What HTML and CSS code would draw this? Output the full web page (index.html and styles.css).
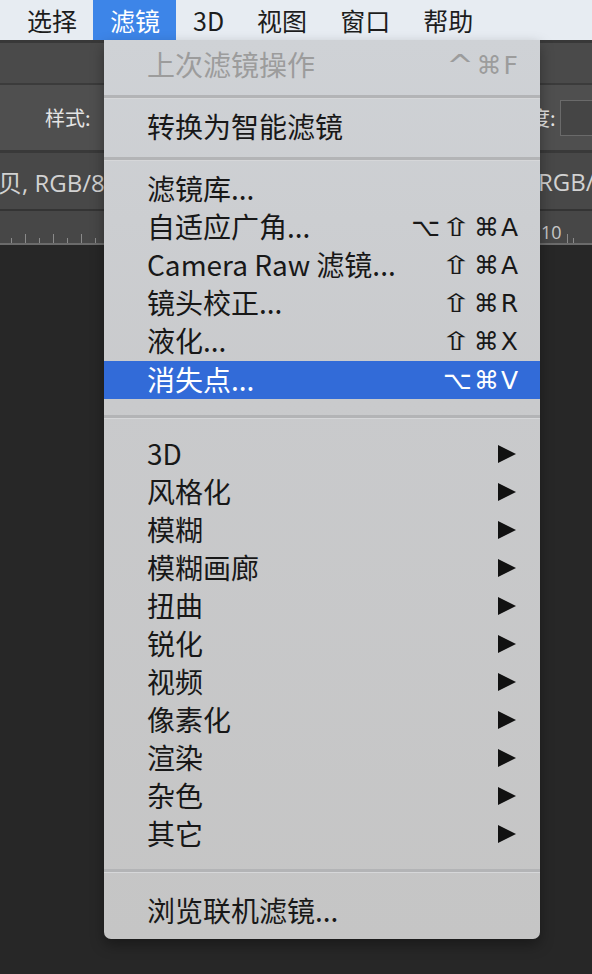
FILE: index.html
```html
<!DOCTYPE html>
<html lang="zh-CN">
<head>
<meta charset="utf-8">
<title>滤镜菜单</title>
<link rel="stylesheet" href="styles.css">
</head>
<body>
<div class="menubar">
  <span class="mb-item">选择</span>
  <span class="mb-item active">滤镜</span>
  <span class="mb-item">3D</span>
  <span class="mb-item">视图</span>
  <span class="mb-item">窗口</span>
  <span class="mb-item">帮助</span>
</div>
<div class="workspace">
  <div class="appbar"></div>
  <div class="options">
    <span class="opt-label">样式:</span>
    <div class="opt-right"><span class="opt-label">度:</span><span class="opt-box"></span></div>
  </div>
  <div class="tabs">
    <span class="tab-text">贝, RGB/8</span>
    <span class="tab-text right">RGB/8</span>
  </div>
  <div class="ruler">
    <div class="ticks">
      <i class="t s"></i><i class="t"></i><i class="t s"></i><i class="t"></i><i class="t s"></i><i class="t"></i><i class="t s"></i>
    </div>
    <div class="ruler-right"><span class="rnum">10</span><i class="t"></i><i class="t s"></i></div>
  </div>
  <div class="canvas"></div>
</div>

<div class="menu">
  <div class="item disabled"><span class="label">上次滤镜操作</span><span class="sc"><span class="caret">^</span>⌘F</span></div>
  <div class="sep sep-a"></div>
  <div class="item"><span class="label">转换为智能滤镜</span></div>
  <div class="sep sep-b"></div>
  <div class="item"><span class="label">滤镜库...</span></div>
  <div class="item"><span class="label">自适应广角...</span><span class="sc">⌥<span class="shift">⇧</span>⌘A</span></div>
  <div class="item"><span class="label">Camera Raw 滤镜...</span><span class="sc"><span class="shift">⇧</span>⌘A</span></div>
  <div class="item"><span class="label">镜头校正...</span><span class="sc"><span class="shift">⇧</span>⌘R</span></div>
  <div class="item"><span class="label">液化...</span><span class="sc"><span class="shift">⇧</span>⌘X</span></div>
  <div class="item selected"><span class="label">消失点...</span><span class="sc">⌥⌘V</span></div>
  <div class="sep sep-c"></div>
  <div class="item"><span class="label">3D</span><svg class="arrow" viewBox="0 0 18 18"><polygon points="0,0 18,9 0,18"/></svg></div>
  <div class="item"><span class="label">风格化</span><svg class="arrow" viewBox="0 0 18 18"><polygon points="0,0 18,9 0,18"/></svg></div>
  <div class="item"><span class="label">模糊</span><svg class="arrow" viewBox="0 0 18 18"><polygon points="0,0 18,9 0,18"/></svg></div>
  <div class="item"><span class="label">模糊画廊</span><svg class="arrow" viewBox="0 0 18 18"><polygon points="0,0 18,9 0,18"/></svg></div>
  <div class="item"><span class="label">扭曲</span><svg class="arrow" viewBox="0 0 18 18"><polygon points="0,0 18,9 0,18"/></svg></div>
  <div class="item"><span class="label">锐化</span><svg class="arrow" viewBox="0 0 18 18"><polygon points="0,0 18,9 0,18"/></svg></div>
  <div class="item"><span class="label">视频</span><svg class="arrow" viewBox="0 0 18 18"><polygon points="0,0 18,9 0,18"/></svg></div>
  <div class="item"><span class="label">像素化</span><svg class="arrow" viewBox="0 0 18 18"><polygon points="0,0 18,9 0,18"/></svg></div>
  <div class="item"><span class="label">渲染</span><svg class="arrow" viewBox="0 0 18 18"><polygon points="0,0 18,9 0,18"/></svg></div>
  <div class="item"><span class="label">杂色</span><svg class="arrow" viewBox="0 0 18 18"><polygon points="0,0 18,9 0,18"/></svg></div>
  <div class="item"><span class="label">其它</span><svg class="arrow" viewBox="0 0 18 18"><polygon points="0,0 18,9 0,18"/></svg></div>
  <div class="sep sep-d"></div>
  <div class="item"><span class="label">浏览联机滤镜...</span></div>
</div>
</body>
</html>
```

FILE: styles.css
```css
* { box-sizing: border-box; }
html, body {
  margin: 0;
  padding: 0;
  width: 592px;
  height: 974px;
  overflow: hidden;
  background: #272727;
  font-family: "Noto Sans CJK SC", "Liberation Sans", sans-serif;
}

.menubar {
  height: 40px;
  background: #e7ecf2;
  display: flex;
  align-items: stretch;
  padding-left: 10px;
}
.mb-item {
  display: flex;
  align-items: center;
  padding: 0 16px 0 17px;
  font-size: 25px;
  color: #1d1d1d;
  line-height: 1;
}
.mb-item.active {
  background: #3d85e8;
  color: #ffffff;
}

.workspace {
  display: flex;
  flex-direction: column;
  height: 934px;
}
.appbar {
  height: 45px;
  background: #4a4a4a;
  border-top: 3px solid #383838;
  border-bottom: 2px solid #3b3b3b;
}
.options {
  height: 68px;
  background: #4f4f4f;
  border-bottom: 3px solid #393939;
  display: grid;
  grid-template-columns: 485px auto;
  align-items: center;
  padding-left: 45px;
  white-space: nowrap;
  overflow: hidden;
}
.opt-label {
  font-size: 20px;
  color: #e4e4e4;
  font-family: "Noto Sans CJK SC", sans-serif;
}
.opt-right {
  display: flex;
  align-items: center;
  gap: 4px;
}
.opt-box {
  width: 40px;
  height: 36px;
  border: 1px solid #6a6a6a;
  background: #454545;
}
.tabs {
  height: 58px;
  background: #484848;
  border-bottom: 2px solid #343434;
  display: grid;
  grid-template-columns: 538px auto;
  align-items: center;
  white-space: nowrap;
  overflow: hidden;
}
.tab-text {
  font-size: 24px;
  color: #d2d2d2;
  font-family: "Open Sans", "Noto Sans CJK SC", sans-serif;
  margin-left: -2px;
}
.tab-text.right { margin-left: 0; }
.ruler {
  height: 34px;
  background: #474747;
  border-bottom: 2px solid #6b6b6b;
  display: grid;
  grid-template-columns: 540px auto;
  align-items: end;
  overflow: hidden;
}
.ticks {
  display: flex;
  gap: 13px;
  padding-left: 11px;
  align-items: flex-end;
}
.t {
  display: block;
  width: 1px;
  height: 9px;
  background: #8a8a8a;
}
.t.s { height: 5px; }
.ruler-right {
  display: flex;
  align-items: flex-end;
  gap: 5px;
  padding-left: 1px;
}
.rnum {
  font-size: 18px;
  color: #c8c8c8;
  font-family: "Open Sans", sans-serif;
  line-height: 1;
  margin-bottom: 2px;
}
.canvas {
  flex: 1;
  background: #272727;
}

/* dropdown menu overlays the workspace */
.menu {
  position: absolute;
  left: 104px;
  top: 40px;
  width: 436px;
  padding: 6px 0 9px;
  background: linear-gradient(#cfd2d6, #c9cacc 40%, #c5c5c5);
  border-radius: 0 0 7px 7px;
  box-shadow: 0 6px 14px rgba(0,0,0,0.35);
}
.item {
  height: 38px;
  display: flex;
  align-items: center;
  justify-content: space-between;
  padding: 0 22px 0 43px;
  font-size: 28px;
  color: #181818;
  line-height: 1;
  white-space: nowrap;
}
.label { position: relative; top: -1px; }
.item.disabled { color: #9c9c9c; }
.item.selected {
  background: #326bd8;
  color: #ffffff;
  margin-top: 1px;
}
.sc {
  font-family: "DejaVu Sans", "Liberation Sans", sans-serif;
  font-size: 25px;
  letter-spacing: 2px;
  margin-right: -2px;
  display: flex;
  align-items: center;
}
.shift {
  display: inline-block;
  transform: scaleX(1.55);
  margin: 0 5px 0 4px;
}
.caret {
  display: inline-block;
  transform: scale(1.3, 1.1);
  margin-right: 4px;
}
.arrow {
  width: 18px;
  height: 18px;
  fill: #111111;
  margin-right: 2px;
}
.sep { position: relative; }
.sep::after {
  content: "";
  position: absolute;
  left: 0;
  right: 0;
  height: 3px;
  background: #b3b4b6;
  border-bottom: 1px solid #d6d7d9;
}
.sep-a { height: 24px; }
.sep-a::after { top: 11px; }
.sep-b { height: 24px; }
.sep-b::after { top: 11px; }
.sep-c { height: 36px; }
.sep-c::after { top: 16px; }
.sep-d { height: 39px; }
.sep-d::after { top: 16px; }
```
